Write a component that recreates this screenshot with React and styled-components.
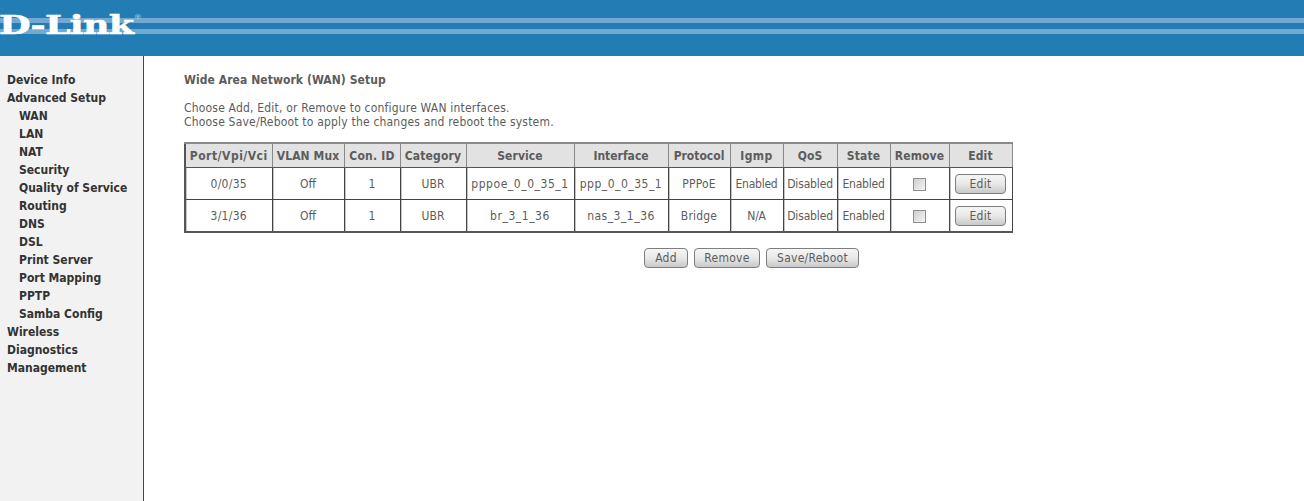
import React from "react";
import styled, { createGlobalStyle } from "styled-components";

const Global = createGlobalStyle`
  html, body { margin: 0; padding: 0; background: #fff; }
  body { font-family: "DejaVu Sans Condensed", "DejaVu Sans", sans-serif; }
`;
const Page = styled.div`width: 1304px; height: 501px; overflow: hidden; display: flex; flex-direction: column;`;
const Header = styled.header`
  height: 56px; flex: none; display: flex; align-items: flex-start; overflow: hidden;
  background:
    linear-gradient(#73a8d2, #73a8d2) 0 18px / 100% 5px no-repeat,
    linear-gradient(#73a8d2, #73a8d2) 0 29px / 100% 5px no-repeat,
    #237db5;
`;
const Logo = styled.div`
  margin: 12px 0 0 -1px; color: #fff; font: bold 26px/26px "DejaVu Serif", serif; letter-spacing: -.5px;
  -webkit-text-stroke: .6px #fff; white-space: nowrap; transform: scaleX(1.4); transform-origin: left top;
`;
const Mark = styled.sup`
  font: 6px/1 "Liberation Sans", sans-serif; -webkit-text-stroke: 0; color: #cfe0ee; vertical-align: 15px; margin-left: 1px;
`;
const Body = styled.div`flex: 1; display: flex;`;
const Side = styled.nav`
  width: 144px; flex: none; box-sizing: border-box; padding: 15px 0 0 7px; background: #f2f2f2; border-right: 1px solid #9a1c3c;
`;
const NavItem = styled.div`
  height: 18px; line-height: 18px; font-size: 12px; font-weight: bold; color: #333; padding-left: ${p => p.$sub ? 12 : 0}px; white-space: nowrap;
`;
const Main = styled.main`flex: 1; padding: 16px 0 0 40px; color: #5c5c5c;`;
const Title = styled.div`font-size: 12px; font-weight: bold; line-height: 16px; margin-bottom: 13px; letter-spacing: .07px;`;
const Intro = styled.div`font-size: 12px; line-height: 14px; margin-bottom: 13px; letter-spacing: .19px;`;
const Table = styled.table`border-collapse: collapse; table-layout: fixed; width: 828px; font-size: 12px; color: #5c5c5c; border-bottom: 2px solid #555; border-left: 2px solid #555;`;
const Th = styled.th`
  height: 23px; padding: 0; background: #e2e2e2; font-weight: bold; border: 1px solid #555; border-top: 2px solid #8a8a8a; border-right-color: #888; text-align: center; white-space: nowrap; letter-spacing: ${p => p.$ls}px;
`;
const Td = styled.td`height: 31px; padding: 0; border: 1px solid #444; text-align: center; white-space: nowrap; letter-spacing: ${p => p.$ls}px; box-shadow: inset 1px 0 0 #c4c4c4;`;
const Check = styled.span`
  display: inline-block; vertical-align: middle; width: 11px; height: 11px; border: 1px solid #8e8e8e;
  background: linear-gradient(135deg, #cfcfcf, #f4f4f4);
`;
const Btn = styled.button`
  font: 12px "DejaVu Sans Condensed", "DejaVu Sans", sans-serif; letter-spacing: .25px; color: #5c5c5c; padding: 0; height: 20px; width: ${p => p.$w}px;
  border: 1px solid #7e7e7e; border-radius: 4px; background: linear-gradient(#f6f6f6, #e8e8e8 50%, #c9c9c9);
`;
const Actions = styled.div`display: flex; gap: 6px; margin: 15px 0 0 460px;`;

const cols = [87,72,56,66,108,94,62,53,54,53,59,63];
const heads = ["Port/Vpi/Vci","VLAN Mux","Con. ID","Category","Service","Interface","Protocol","Igmp","QoS","State","Remove","Edit"];
const headLs = [.5,.1,.2,.15,.1,0,0,.4,.1,.15,.1,.1];
const cellLs = [.3,0,0,.1,.55,.5,.2,-.25,-.15,-.2];
const rows = [
  ["0/0/35","Off","1","UBR","pppoe_0_0_35_1","ppp_0_0_35_1","PPPoE","Enabled","Disabled","Enabled"],
  ["3/1/36","Off","1","UBR","br_3_1_36","nas_3_1_36","Bridge","N/A","Disabled","Enabled"],
];
const nav = [["Device Info"],["Advanced Setup"],["WAN",1],["LAN",1],["NAT",1],["Security",1],["Quality of Service",1],["Routing",1],["DNS",1],["DSL",1],["Print Server",1],["Port Mapping",1],["PPTP",1],["Samba Config",1],["Wireless"],["Diagnostics"],["Management"]];

export default function App() {
  return (
    <Page>
      <Global />
      <Header><Logo>D-Link<Mark>®</Mark></Logo></Header>
      <Body>
        <Side>{nav.map(([t, s]) => <NavItem key={t} $sub={s}>{t}</NavItem>)}</Side>
        <Main>
          <Title>Wide Area Network (WAN) Setup</Title>
          <Intro>Choose Add, Edit, or Remove to configure WAN interfaces.<br />Choose Save/Reboot to apply the changes and reboot the system.</Intro>
          <Table>
            <colgroup>{cols.map((w, i) => <col key={i} width={w} />)}</colgroup>
            <thead><tr>{heads.map((h, i) => <Th key={h} $ls={headLs[i]}>{h}</Th>)}</tr></thead>
            <tbody>{rows.map(r => (
              <tr key={r[0]}>
                {r.map((c, i) => <Td key={i} $ls={cellLs[i]}>{c}</Td>)}
                <Td $ls={0}><Check /></Td>
                <Td $ls={0}><Btn $w={51}>Edit</Btn></Td>
              </tr>
            ))}</tbody>
          </Table>
          <Actions><Btn $w={44}>Add</Btn><Btn $w={66}>Remove</Btn><Btn $w={93}>Save/Reboot</Btn></Actions>
        </Main>
      </Body>
    </Page>
  );
}
